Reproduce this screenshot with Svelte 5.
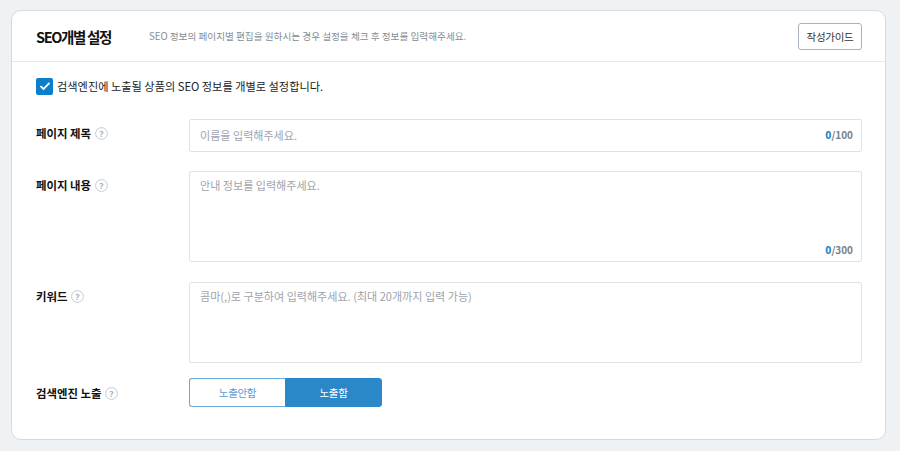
<script lang="ts">
  let exposed = $state(true);
  let useSeo = $state(true);
</script>

{#snippet help()}
  <svg class="help" width="13" height="13" viewBox="0 0 13 13" aria-hidden="true">
    <circle cx="6.5" cy="6.5" r="5.9" fill="none" stroke="#c3ccd4" />
    <text x="6.5" y="9.6" text-anchor="middle" class="help-mark">?</text>
  </svg>
{/snippet}

<div class="page">
  <section class="card">
    <header class="head">
      <h2>SEO개별 설정</h2>
      <p>SEO 정보의 페이지별 편집을 원하시는 경우 설정을 체크 후 정보를 입력해주세요.</p>
      <button class="guide" type="button">작성가이드</button>
    </header>

    <div class="body">
      <label class="check">
        <input type="checkbox" bind:checked={useSeo} />
        <span class="box">
          <svg width="12" height="10" viewBox="0 0 12 10" aria-hidden="true">
            <path d="M1.5 5.2 4.5 8 10.5 1.8" fill="none" stroke="#fff" stroke-width="1.8" />
          </svg>
        </span>
        <span>검색엔진에 노출될 상품의 SEO 정보를 개별로 설정합니다.</span>
      </label>

      <div class="row first">
        <div class="label">페이지 제목 {@render help()}</div>
        <div class="field single">
          <span class="placeholder">이름을 입력해주세요.</span>
          <span class="count"><b>0</b>/100</span>
        </div>
      </div>

      <div class="row">
        <div class="label">페이지 내용 {@render help()}</div>
        <div class="field multi">
          <span class="placeholder">안내 정보를 입력해주세요.</span>
          <span class="count"><b>0</b>/300</span>
        </div>
      </div>

      <div class="row keywords">
        <div class="label">키워드 {@render help()}</div>
        <div class="field multi short">
          <span class="placeholder">콤마(,)로 구분하여 입력해주세요. (최대 20개까지 입력 가능)</span>
        </div>
      </div>

      <div class="row toggle-row">
        <div class="label">검색엔진 노출 {@render help()}</div>
        <div class="toggle">
          <button type="button" class:on={!exposed} onclick={() => (exposed = false)}>노출안함</button>
          <button type="button" class:on={exposed} onclick={() => (exposed = true)}>노출함</button>
        </div>
      </div>
    </div>
  </section>
</div>

<style>
  :global(body) {
    background: #eef2f5;
    font-family: "Noto Sans CJK KR", "Noto Sans", sans-serif;
  }

  .page {
    padding: 10px 14px 11px 11px;
  }

  .card {
    height: 430px;
    box-sizing: border-box;
    background: #fff;
    border: 1px solid #d3dbe2;
    border-radius: 10px;
  }

  .head {
    display: flex;
    align-items: center;
    height: 50px;
    padding: 0 23px 0 24px;
    border-bottom: 1px solid #e4e8ec;
  }

  h2 {
    margin: 0;
    width: 113px;
    flex-shrink: 0;
    font-size: 14.5px;
    font-weight: 700;
    letter-spacing: -1.35px;
    color: #111;
  }

  .head p {
    flex: 1;
    margin: 0;
    font-size: 9.65px;
    color: #858c93;
  }

  .guide {
    width: 64px;
    height: 27px;
    padding: 0;
    background: #fff;
    border: 1px solid #a9b2ba;
    border-radius: 3px;
    font: inherit;
    font-size: 10.5px;
    letter-spacing: -0.3px;
    color: #333;
  }

  .body {
    padding: 14px 23px 0 24px;
  }

  .check {
    display: flex;
    align-items: center;
    gap: 4px;
    height: 20px;
    font-size: 11.2px;
    color: #222;
  }

  .check input {
    display: none;
  }

  .box {
    display: flex;
    align-items: center;
    justify-content: center;
    width: 17px;
    height: 17px;
    background: #0b7fcb;
    border-radius: 2px;
  }

  .row {
    display: flex;
    margin-top: 19px;
  }

  .row.first {
    margin-top: 23px;
  }

  .row.keywords {
    margin-top: 20px;
  }

  .label {
    display: flex;
    align-items: flex-start;
    gap: 4px;
    width: 153px;
    flex-shrink: 0;
    padding-top: 5px;
    font-size: 11.4px;
    font-weight: 700;
    color: #111;
    line-height: 18px;
  }

  .help {
    margin-top: 3px;
  }

  .help-mark {
    font-size: 9px;
    fill: #a9b3bc;
    font-family: "Noto Sans", sans-serif;
  }

  .field {
    position: relative;
    flex: 1;
    box-sizing: border-box;
    background: #fff;
    border: 1px solid #dfe3e8;
    border-radius: 2px;
    padding: 4px 10px;
    font-size: 11.05px;
    line-height: 18px;
  }

  .field.single {
    height: 33px;
    padding-top: 6px;
  }

  .field.multi {
    height: 91px;
  }

  .field.short {
    height: 81px;
  }

  .placeholder {
    color: #9da4ab;
  }

  .count {
    position: absolute;
    right: 8px;
    bottom: 2px;
    font-size: 10px;
    font-weight: 700;
    color: #777f87;
  }

  .single .count {
    bottom: 7px;
  }

  .count b {
    color: #2a87c8;
  }

  .toggle-row {
    align-items: center;
    margin-top: 15px;
  }

  .toggle-row .label {
    padding-top: 0;
  }

  .toggle {
    display: flex;
    width: 193px;
    height: 29px;
  }

  .toggle button {
    flex: 1;
    padding: 0;
    background: #fff;
    border: 1px solid #6aa9d8;
    font: inherit;
    font-size: 10.5px;
    letter-spacing: -0.3px;
    color: #5b9bd5;
  }

  .toggle button:first-child {
    flex: 0 0 96px;
    border-right: 0;
    border-radius: 3px 0 0 3px;
  }

  .toggle button:last-child {
    border-radius: 0 3px 3px 0;
  }

  .toggle button.on {
    background: #2a87c8;
    border-color: #2a87c8;
    color: #fff;
  }
</style>
